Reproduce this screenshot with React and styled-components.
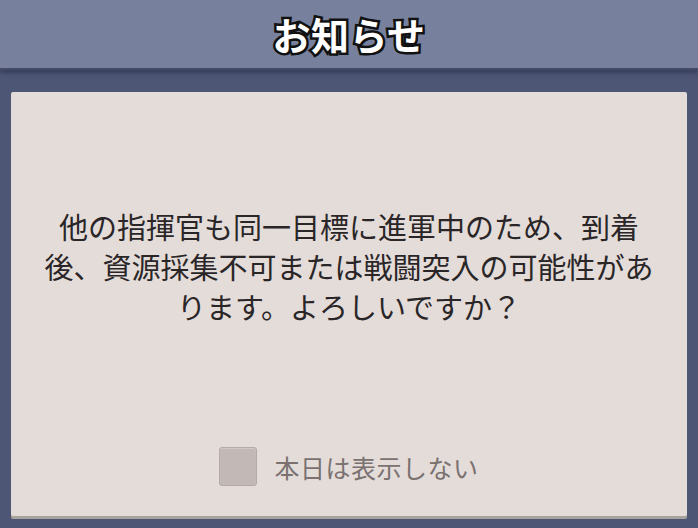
import styled, { createGlobalStyle } from "styled-components";

const GlobalStyle = createGlobalStyle`
  html, body {
    margin: 0;
    padding: 0;
    background: #4e5675;
  }
  body {
    font-family: "Noto Sans CJK JP", "Noto Sans", sans-serif;
  }
`;

const Screen = styled.div`
  width: 698px;
  height: 528px;
  display: flex;
  flex-direction: column;
  background: #4e5675;
  overflow: hidden;
`;

const Header = styled.header`
  height: 68px;
  flex: none;
  display: flex;
  align-items: center;
  justify-content: center;
  background: #77819e;
  box-shadow: 0 2px 0 #434b69, 0 5px 4px rgba(30, 36, 60, 0.45);
  position: relative;
  z-index: 1;
`;

const Title = styled.h1`
  margin: 0;
  font-size: 38px;
  font-weight: 700;
  color: #fff;
  letter-spacing: 0.5px;
  line-height: 1;
  -webkit-text-stroke: 5px #111;
  paint-order: stroke fill;
  text-shadow: 2px 2px 0 #111;
`;

const Body = styled.main`
  flex: 1;
  padding: 24px 11px 12px;
  display: flex;
`;

const Card = styled.section`
  flex: 1;
  background: #e4dcd9;
  border-radius: 2px;
  box-shadow: 0 3px 0 #a8a39c;
  display: flex;
  flex-direction: column;
  align-items: center;
  padding: 0 28px;
`;

const Message = styled.p`
  margin: 0;
  margin-top: 114px;
  font-size: 29px;
  font-weight: 400;
  line-height: 40px;
  color: #2a2628;
  text-align: center;
  line-break: strict;
`;

const Option = styled.label`
  margin-top: auto;
  margin-bottom: 30px;
  display: flex;
  align-items: center;
  gap: 17px;
  cursor: pointer;
`;

const Box = styled.span`
  width: 36px;
  height: 37px;
  border-radius: 3px;
  background: #c2b9b7;
  border: 1px solid #b4aaa8;
  box-shadow: inset 0 1px 1px rgba(255, 255, 255, 0.25);
`;

const OptionText = styled.span`
  font-size: 25px;
  color: #7a7170;
  letter-spacing: 0.5px;
`;

export default function App() {
  return (
    <Screen>
      <GlobalStyle />
      <Header>
        <Title>お知らせ</Title>
      </Header>
      <Body>
        <Card>
          <Message>
            他の指揮官も同一目標に進軍中のため、到着後、資源採集不可または戦闘突入の可能性があります。よろしいですか？
          </Message>
          <Option>
            <Box />
            <OptionText>本日は表示しない</OptionText>
          </Option>
        </Card>
      </Body>
    </Screen>
  );
}
